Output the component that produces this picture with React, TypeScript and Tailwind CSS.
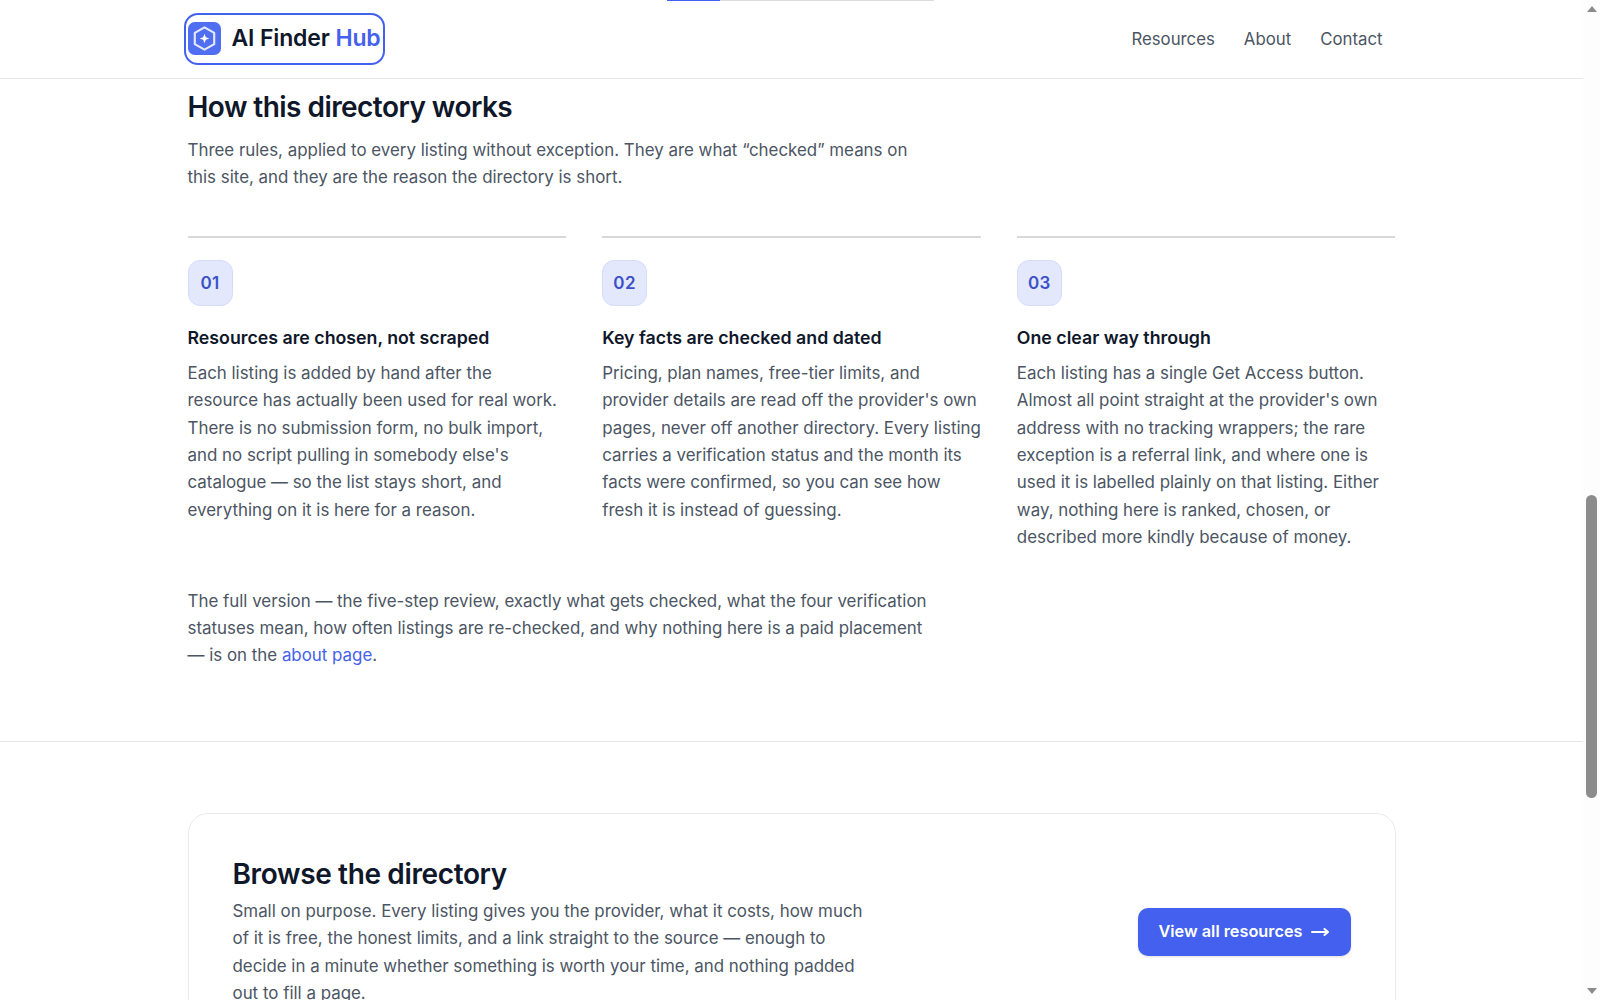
import type { ReactNode } from 'react';

const steps = [
  {
    num: '01',
    title: 'Resources are chosen, not scraped',
    lines: [
      'Each listing is added by hand after the',
      'resource has actually been used for real work.',
      'There is no submission form, no bulk import,',
      "and no script pulling in somebody else's",
      'catalogue — so the list stays short, and',
      'everything on it is here for a reason.',
    ],
  },
  {
    num: '02',
    title: 'Key facts are checked and dated',
    lines: [
      'Pricing, plan names, free-tier limits, and',
      "provider details are read off the provider's own",
      'pages, never off another directory. Every listing',
      'carries a verification status and the month its',
      'facts were confirmed, so you can see how',
      'fresh it is instead of guessing.',
    ],
  },
  {
    num: '03',
    title: 'One clear way through',
    lines: [
      'Each listing has a single Get Access button.',
      "Almost all point straight at the provider's own",
      'address with no tracking wrappers; the rare',
      'exception is a referral link, and where one is',
      'used it is labelled plainly on that listing. Either',
      'way, nothing here is ranked, chosen, or',
      'described more kindly because of money.',
    ],
  },
];

function Logo() {
  return (
    <a className="flex h-[52px] w-[201px] items-center gap-[11px] rounded-[14px] border-2 border-[#4361ee] pl-[2px]">
      <svg width="33" height="33" viewBox="0 0 34 34" className="shrink-0">
        <rect width="34" height="34" rx="7" fill="#4f6ef0" />
        <path d="M17 5.5 27 11.2V22.8L17 28.5 7 22.8V11.2Z" fill="none" stroke="#e4e9fd" strokeWidth="2.2" strokeLinejoin="round" />
        <path d="M17 12 18.4 15.6 22 17 18.4 18.4 17 22 15.6 18.4 12 17 15.6 15.6Z" fill="#fff" />
      </svg>
      <span className="whitespace-nowrap text-[23px] font-semibold tracking-[-0.15px] text-[#0f172a]">
        AI Finder <span className="text-[#4361ee]">Hub</span>
      </span>
    </a>
  );
}

function Lines({ children }: { children: ReactNode }) {
  return <p className="text-[16.9px] leading-[27.4px] text-[#4b5563]">{children}</p>;
}

function Step({ step }: { step: (typeof steps)[number] }) {
  return (
    <div className="border-t-2 border-[#d8d8d8] pt-[22px]">
      <div className="flex h-[46px] w-[45px] items-center justify-center rounded-[12px] border border-[#d5dcfb] bg-[#e3e8fd] pt-[1px] text-[17px] font-semibold tracking-[0.4px] text-[#3b50c8]">
        {step.num}
      </div>
      <h3 className="mb-[9px] mt-[18px] text-[17.76px] font-semibold leading-[27px] text-[#0f172a]">{step.title}</h3>
      <Lines>
        {step.lines.map((line) => (
          <span key={line} className="block whitespace-nowrap">{line}</span>
        ))}
      </Lines>
    </div>
  );
}

export default function App() {
  return (
    <div className="relative flex h-screen overflow-hidden bg-white font-['Inter',sans-serif]">
      <div className="absolute left-[667px] top-0 flex h-px w-[267px] bg-[#dddddd]">
        <div className="h-full w-[53px] bg-[#4361ee]" />
      </div>

      <div className="min-w-0 flex-1 overflow-hidden">
        <header className="h-[79px] border-b border-[#e5e7eb]">
          <div className="mx-auto flex h-full w-[1208px] items-center justify-between pb-[1px] pr-[13px]">
            <div className="-ml-[4px]">
              <Logo />
            </div>
            <nav className="mt-[2px] flex gap-[29px] text-[16.8px] text-[#4b5563]">
              <a>Resources</a>
              <a>About</a>
              <a>Contact</a>
            </nav>
          </div>
        </header>

        <section className="mx-auto w-[1208px] pt-[10px]">
          <h2 className="mb-[12px] text-[28px] font-semibold leading-[36px] tracking-[-0.55px] text-[#0f172a]">How this directory works</h2>
          <Lines>
            <span className="block">Three rules, applied to every listing without exception. They are what “checked” means on</span>
            <span className="block">this site, and they are the reason the directory is short.</span>
          </Lines>

          <div className="mb-[36px] mt-[44px] grid grid-cols-3 gap-[36px]">
            {steps.map((step) => (
              <Step key={step.num} step={step} />
            ))}
          </div>

          <Lines>
            <span className="block">The full version — the five-step review, exactly what gets checked, what the four verification</span>
            <span className="block">statuses mean, how often listings are re-checked, and why nothing here is a paid placement</span>
            <span className="block">— is on the <a className="text-[#4361ee]">about page</a>.</span>
          </Lines>
        </section>

        <div className="mt-[71px] border-t border-[#e5e7eb]" />

        <section className="mx-auto mt-[71px] w-[1208px]">
          <div className="flex items-center justify-between rounded-[20px] border border-[#e9eaee] px-[44px] pb-[51px] pt-[42px]">
            <div>
              <h2 className="mb-[6px] text-[28px] font-semibold leading-[36px] tracking-[-0.36px] text-[#0f172a]">Browse the directory</h2>
              <Lines>
                <span className="block">Small on purpose. Every listing gives you the provider, what it costs, how much</span>
                <span className="block">of it is free, the honest limits, and a link straight to the source — enough to</span>
                <span className="block">decide in a minute whether something is worth your time, and nothing padded</span>
                <span className="block">out to fill a page.</span>
              </Lines>
            </div>
            <a className="flex h-[48px] w-[213px] items-center justify-center gap-[9px] rounded-[10px] bg-[#4361ee] text-[16.3px] font-semibold text-white shadow-sm">
              View all resources
              <svg width="18" height="10" viewBox="0 0 18 10" fill="none" stroke="currentColor" strokeWidth="2" strokeLinecap="round" strokeLinejoin="round">
                <path d="M1 5H17M13.5 2 17 5 13.5 8" />
              </svg>
            </a>
          </div>
        </section>
      </div>

      <aside className="flex h-screen w-[17px] shrink-0 flex-col items-center bg-[#fdfdfd]">
        <div className="mt-[6px] h-0 w-0 border-x-[5px] border-b-[6px] border-x-transparent border-b-[#8a8a8a]" />
        <div className="mt-[483px] h-[303px] w-[11px] rounded-full bg-[#8c8c8c]" />
        <div className="mb-[6px] mt-auto h-0 w-0 border-x-[5px] border-t-[6px] border-x-transparent border-t-[#8a8a8a]" />
      </aside>
    </div>
  );
}
